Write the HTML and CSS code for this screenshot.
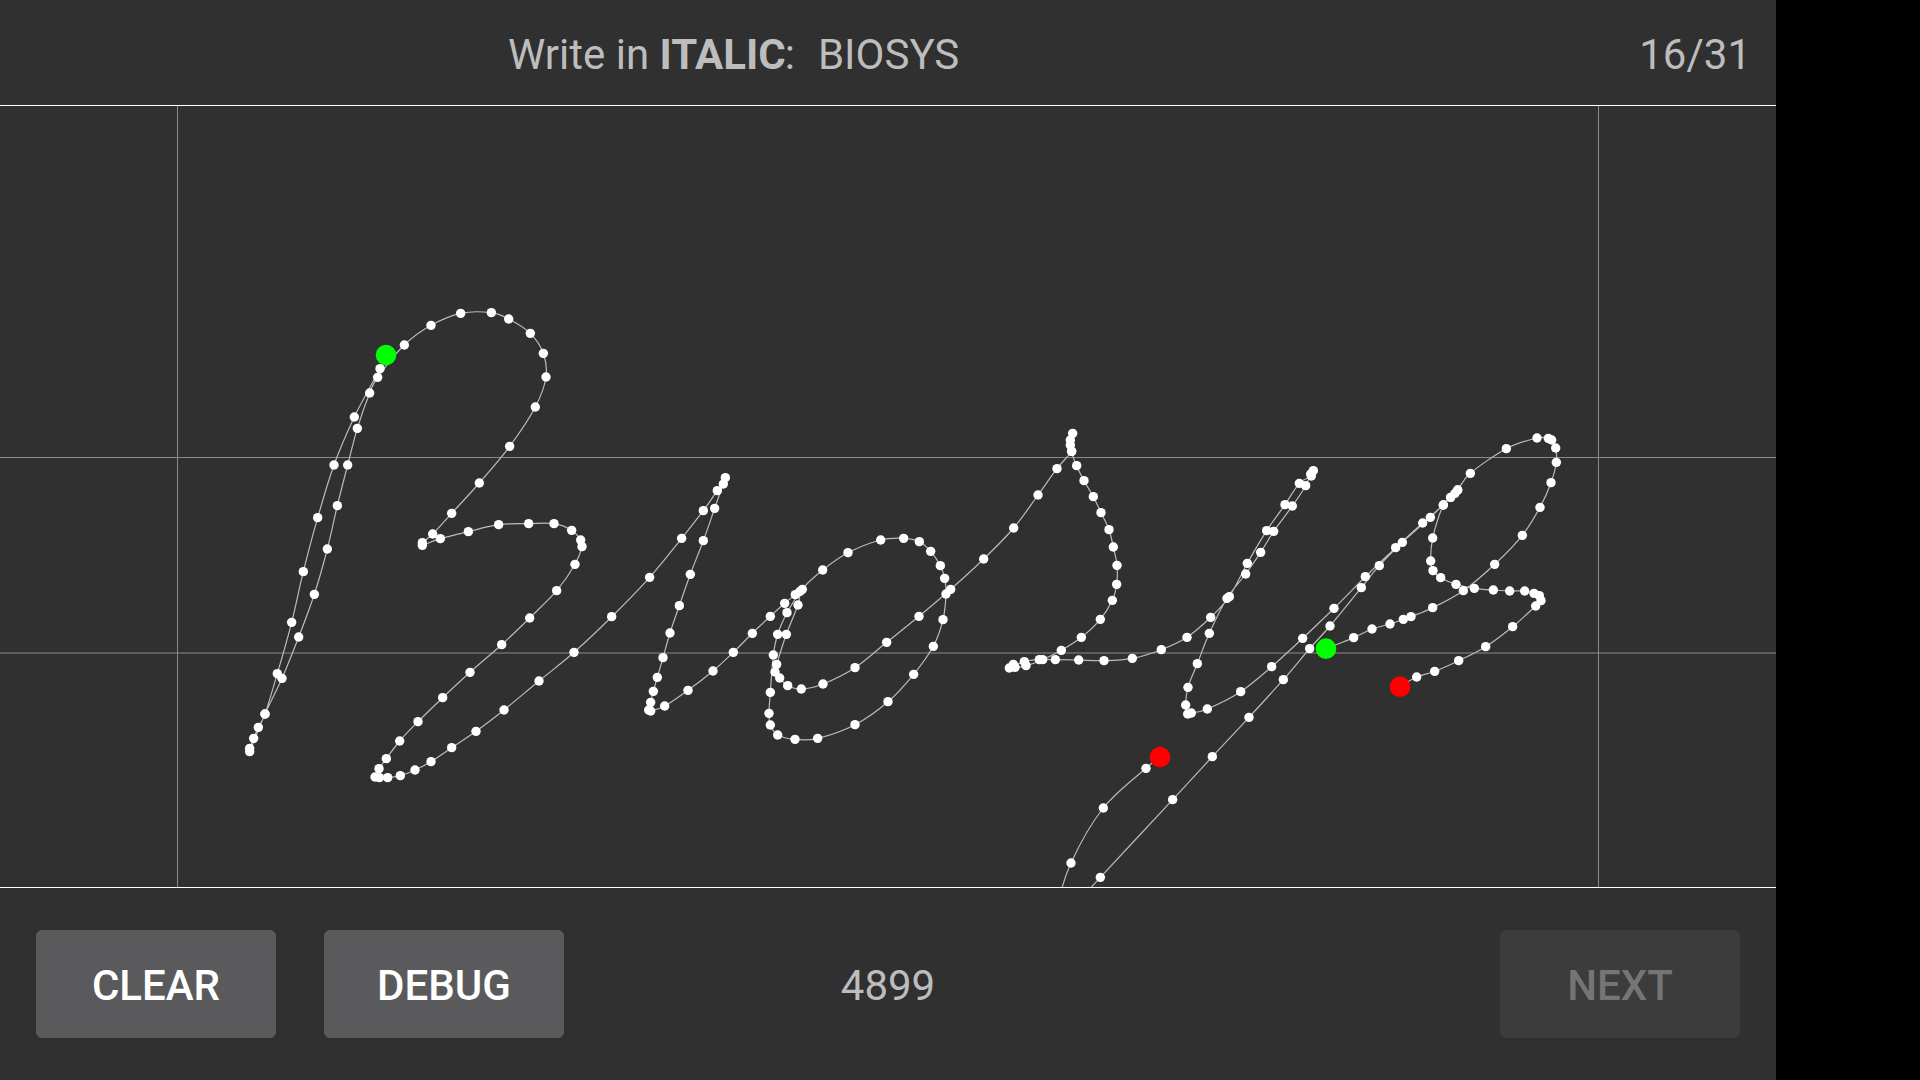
FILE: index.html
```html
<!DOCTYPE html>
<html lang="en">
<head>
  <meta charset="UTF-8" />
  <title>Handwriting capture</title>
  <link rel="stylesheet" href="styles.css">
</head>
<body>
  <div class="app">
    <header class="top">
      <div class="prompt">Write in <b>ITALIC</b>:<span class="word">BIOSYS</span></div>
      <div class="progress">16/31</div>
    </header>

    <svg id="pad" class="pad" viewBox="0 106 1776 781" xmlns="http://www.w3.org/2000/svg">
      <line class="guide" x1="177.5" y1="106" x2="177.5" y2="887" />
      <line class="guide" x1="1598.5" y1="106" x2="1598.5" y2="887" />
      <line class="guide" x1="0" y1="457.5" x2="1776" y2="457.5" />
      <line class="guide" x1="0" y1="653" x2="1776" y2="653" />
    </svg>

    <footer class="bottom">
      <div class="actions">
        <button class="btn">CLEAR</button>
        <button class="btn">DEBUG</button>
      </div>
      <div class="score">4899</div>
      <button class="btn next" disabled>NEXT</button>
    </footer>
  </div>
  <script src="script.js"></script>
</body>
</html>
```

FILE: styles.css
```css
html, body {
  margin: 0;
  height: 100%;
  background: #000;
}
body {
  font-family: Roboto, "Liberation Sans", sans-serif;
  overflow: hidden;
}
.app {
  width: 1776px;
  height: 1080px;
  background: #303030;
  display: flex;
  flex-direction: column;
}
.top {
  height: 102px;
  flex: none;
  display: flex;
  align-items: center;
  justify-content: space-between;
  padding: 3px 25px 0 508px;
  border-bottom: 1px solid #fff;
  color: #bdbdbd;
  font-size: 42px;
}
.prompt b {
  font-weight: 700;
  margin-right: -1px;
}
.word {
  margin-left: 23px;
}
.pad {
  display: block;
  width: 1776px;
  height: 781px;
  flex: none;
}
.guide {
  stroke: #8a8a8a;
  stroke-width: 1;
}
.stroke {
  fill: none;
  stroke: #bbb;
  stroke-width: 1.2;
}
.dot {
  fill: #fff;
}
.start {
  fill: #00ff00;
}
.end {
  fill: #ff0000;
}
.bottom {
  flex: 1;
  border-top: 1px solid #fff;
  padding: 0 36px;
  display: grid;
  grid-template-columns: 1fr auto 1fr;
  align-items: center;
}
.actions {
  display: flex;
  gap: 48px;
}
.btn {
  width: 240px;
  height: 108px;
  padding: 2px 0 0;
  border: none;
  border-radius: 6px;
  background: #5a5a5c;
  color: #fff;
  font-family: inherit;
  font-size: 42px;
  font-weight: 500;
}
.next {
  justify-self: end;
  background: #3c3c3c;
  color: #757575;
}
.score {
  padding-top: 2px;
  color: #bdbdbd;
  font-size: 42px;
}
```

FILE: script.js
```js
// Pen samples, grouped in runs. Each run has an origin and its points in 1/3 px from there.
const strokes = [
  [
    { o: [220, 290], p: [[498,195],[480,236],[403,381],[342,525],[293,683],[250,845]] },
    { o: [220, 520], p: [[215,307],[172,461],[135,582],[115,622],[101,655],[89,685],[89,695],[135,582],[186,475],[236,351],[283,223],[322,87]] },
    { o: [220, 290], p: [[352,647],[383,525],[412,415],[449,309],[473,262],[553,165],[633,106],[722,70],[814,68],[866,87],[931,130],[970,190],[978,261],[946,351],[869,469],[778,579],[695,670],[638,732],[607,758],[607,766],[661,746],[745,725],[836,704],[926,701],[1002,701],[1055,721],[1082,750],[1086,770],[1065,823]] },
    { o: [220, 520], p: [[1010,212],[929,294],[845,374],[750,457],[668,533],[594,605],[539,663],[499,716],[477,746],[465,771],[478,773],[503,773],[541,767],[585,750],[633,725],[695,683],[768,634],[852,570],[957,483],[1062,397],[1175,290]] },
    { o: [620, 460], p: [[89,352],[185,235],[250,152],[292,92],[310,72],[316,53],[284,145],[250,242],[211,343],[178,437],[150,519],[129,593],[112,652],[100,694],[92,727],[86,750],[92,753],[134,738],[204,691],[279,633],[340,577],[397,520],[451,469],[494,430],[526,404],[540,394],[501,458],[473,523],[460,585],[451,697],[447,760],[451,795],[473,825],[525,838],[593,835],[705,794],[804,725],[881,643],[940,559],[969,479],[978,402],[974,355],[961,317],[932,274],[898,245],[851,235],[782,240],[684,278],[608,330],[547,388],[534,435],[499,523],[470,613],[465,636],[479,654],[503,677],[544,687],[609,672],[705,623],[800,547],[897,469],[992,388],[1091,297],[1181,204]] },
    { o: [990, 420], p: [[144,225],[201,146],[245,94],[241,75],[241,60],[248,40],[245,94],[260,137],[282,182],[310,230],[333,278],[357,329],[370,381],[381,436],[380,493],[367,541],[331,598],[274,652],[214,691],[158,719],[108,737],[75,742],[70,733],[58,744],[103,725],[148,719],[196,719],[266,720],[342,722],[427,715],[514,689],[591,652],[662,592],[718,530],[772,430],[830,332],[885,254],[928,190],[964,168],[970,152],[962,162],[947,197],[907,258],[851,334],[812,397],[767,462],[711,535],[658,640],[622,731],[594,802],[587,855],[593,882],[604,879],[652,867],[752,815],[845,740],[938,655]] },
    { o: [1280, 420], p: [[162,565],[256,470],[347,383],[428,309],[490,255],[512,232],[533,210],[525,220],[451,292],[367,367],[298,437],[244,503],[150,618],[89,686],[10,779]] },
    { o: [1050, 640], p: [[597,232],[487,350],[368,479],[151,712],[60,810],[25,800],[63,669],[160,504],[288,385],[330,351]] }
  ],
  [
    { o: [1280, 420], p: [[138,686],[221,653],[276,627],[330,612],[370,598],[393,590],[458,563],[550,512],[644,433],[727,346],[780,262],[813,188],[829,127],[827,84],[815,60],[805,55],[771,54],[679,86],[571,160],[533,210],[512,232],[490,255],[458,354],[452,423],[459,452],[482,473],[528,493],[583,505],[640,510],[689,513],[734,513],[762,520],[778,527],[783,542],[767,558],[698,620],[617,680],[536,722],[464,754],[410,771],[360,800]] }
  ]
];

const NS = 'http://www.w3.org/2000/svg';
const pad = document.getElementById('pad');

function add(tag, attrs) {
  const el = document.createElementNS(NS, tag);
  for (const k in attrs) el.setAttribute(k, attrs[k]);
  pad.appendChild(el);
}

// catmull-rom through the samples
function smooth(pts) {
  let d = `M${pts[0][0]} ${pts[0][1]}`;
  for (let i = 0; i < pts.length - 1; i++) {
    const a = pts[i - 1] || pts[i];
    const b = pts[i];
    const c = pts[i + 1];
    const e = pts[i + 2] || c;
    const x1 = b[0] + (c[0] - a[0]) / 6;
    const y1 = b[1] + (c[1] - a[1]) / 6;
    const x2 = c[0] - (e[0] - b[0]) / 6;
    const y2 = c[1] - (e[1] - b[1]) / 6;
    d += `C${x1.toFixed(1)} ${y1.toFixed(1)} ${x2.toFixed(1)} ${y2.toFixed(1)} ${c[0].toFixed(1)} ${c[1].toFixed(1)}`;
  }
  return d;
}

strokes.forEach((runs) => {
  const pts = [];
  runs.forEach((run) => {
    run.p.forEach(([x, y]) => pts.push([run.o[0] + x / 3, run.o[1] + y / 3]));
  });

  add('path', { class: 'stroke', d: smooth(pts) });
  pts.slice(1, -1).forEach(([x, y]) => {
    add('circle', { class: 'dot', cx: x, cy: y, r: 4.7 });
  });

  const first = pts[0];
  const last = pts[pts.length - 1];
  add('circle', { class: 'start', cx: first[0], cy: first[1], r: 10.3 });
  add('circle', { class: 'end', cx: last[0], cy: last[1], r: 10.3 });
});
```
